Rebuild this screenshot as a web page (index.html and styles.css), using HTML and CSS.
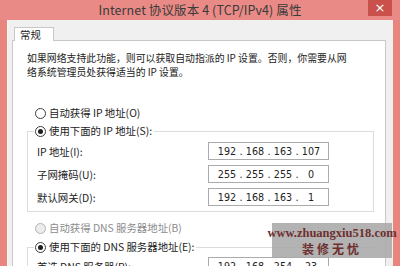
FILE: index.html
```html
<!DOCTYPE html>
<html lang="zh-CN">
<head>
<meta charset="utf-8">
<link rel="stylesheet" href="styles.css">
</head>
<body>
<div class="window">
  <div class="titlebar">
    <span class="title">Internet 协议版本 4 (TCP/IPv4) 属性</span>
    <div class="close">×</div>
  </div>
  <div class="client">
    <div class="tabs"><div class="tab">常规</div></div>
    <div class="panel">
      <p class="desc">如果网络支持此功能，则可以获取自动指派的 IP 设置。否则，你需要从网<br>络系统管理员处获得适当的 IP 设置。</p>
      <div class="radio-row first"><span class="radio"></span>自动获得 IP 地址(O)</div>
      <fieldset class="group">
        <legend><span class="radio checked"></span>使用下面的 IP 地址(S):</legend>
        <div class="row"><span class="lbl">IP 地址(I):</span><div class="ip"><span>192</span><i>.</i><span>168</span><i>.</i><span>163</span><i>.</i><span>107</span></div></div>
        <div class="row"><span class="lbl">子网掩码(U):</span><div class="ip"><span>255</span><i>.</i><span>255</span><i>.</i><span>255</span><i>.</i><span>0</span></div></div>
        <div class="row"><span class="lbl">默认网关(D):</span><div class="ip"><span>192</span><i>.</i><span>168</span><i>.</i><span>163</span><i>.</i><span>1</span></div></div>
      </fieldset>
      <div class="radio-row disabled"><span class="radio"></span>自动获得 DNS 服务器地址(B)</div>
      <fieldset class="group dns">
        <legend><span class="radio checked"></span>使用下面的 DNS 服务器地址(E):</legend>
        <div class="row"><span class="lbl">首选 DNS 服务器(P):</span><div class="ip"><span>192</span><i>.</i><span>168</span><i>.</i><span>254</span><i>.</i><span>23</span></div></div>
      </fieldset>
    </div>
  </div>
  <div class="watermark">
    <div class="wm-url">www.zhuangxiu518.com</div>
    <div class="wm-cn">装修无忧</div>
  </div>
</div>
</body>
</html>
```
FILE: styles.css
```css
html, body {
  margin: 0;
  padding: 0;
}
body {
  width: 400px;
  height: 266px;
  overflow: hidden;
  background: #e8857f;
  font-family: "Noto Sans CJK SC", "Noto Sans", sans-serif;
  color: #222;
}
.window {
  position: relative;
  width: 400px;
  height: 266px;
  overflow: hidden;
  display: flex;
  flex-direction: column;
}
.titlebar {
  position: relative;
  height: 20px;
  flex: none;
  display: flex;
  align-items: center;
  justify-content: center;
  background: #e98a86;
}
.title {
  font-size: 12.5px;
  color: #3a3a3a;
  line-height: 20px;
  letter-spacing: 0.1px;
}
.close {
  position: absolute;
  right: 8px;
  top: 0;
  width: 24px;
  height: 16px;
  background: #c9504b;
  color: #fff;
  font-size: 13px;
  line-height: 15px;
  text-align: center;
  font-family: "DejaVu Sans", sans-serif;
}
.client {
  flex: 1;
  margin: 0 7px 0 7px;
  background: #f0f0f0;
  border-left: 1px solid #f7f7f7;
  padding: 7px 7px 0 4px;
  display: flex;
  flex-direction: column;
}
.tabs {
  display: flex;
  padding-left: 2px;
  height: 13px;
  position: relative;
  z-index: 1;
}
.tab {
  width: 40px;
  height: 14px;
  background: #fff;
  border: 1px solid #c8c8c8;
  border-bottom: none;
  font-size: 10.4px;
  line-height: 14px;
  padding-left: 5px;
  box-sizing: border-box;
  color: #222;
}
.panel {
  flex: 1;
  background: #fff;
  border: 1px solid #c8c8c8;
  border-bottom: none;
  padding: 10px 11px 0 14px;
}
.desc {
  margin: 0;
  font-size: 9.9px;
  line-height: 14px;
  white-space: nowrap;
  color: #222;
}
.radio-row {
  display: flex;
  align-items: center;
  height: 14px;
  font-size: 10.4px;
  line-height: 14px;
  padding-left: 8px;
}
.radio-row.first {
  margin-top: 27px;
}
.radio-row.disabled {
  margin-top: 9px;
  color: #8c8c8c;
}
.radio {
  display: inline-flex;
  align-items: center;
  justify-content: center;
  width: 11px;
  height: 11px;
  box-sizing: border-box;
  border: 1px solid #3c3c3c;
  border-radius: 50%;
  background: #fff;
  margin-right: 3px;
  flex: none;
}
.radio.checked::after {
  content: "";
  width: 5px;
  height: 5px;
  border-radius: 50%;
  background: #1e1e1e;
}
.disabled .radio {
  border-color: #b4b4b4;
  background: #ececec;
}
.group {
  margin: 4px 0 0 0;
  padding: 4px 0 5px 9px;
  border: 1px solid #dcdcdc;
  min-width: 0;
}
.group legend {
  padding: 0 2px 0 1px;
  margin-left: -3px;
  display: flex;
  align-items: center;
  height: 14px;
  font-size: 10.4px;
  line-height: 14px;
}
.group.dns {
  margin-top: 5px;
  padding-top: 3px;
  border-right: none;
}
.row {
  display: flex;
  align-items: center;
  height: 18px;
  margin-bottom: 5px;
  font-size: 10.4px;
}
.row:last-child {
  margin-bottom: 0;
}
.lbl {
  width: 171px;
  flex: none;
}
.ip {
  width: 121px;
  height: 18px;
  box-sizing: border-box;
  border: 1px solid #ababab;
  display: flex;
  align-items: center;
  padding-left: 7px;
  font-family: "DejaVu Sans", sans-serif;
  font-size: 9.6px;
  color: #222;
}
.ip span {
  width: 22px;
  text-align: center;
}
.ip i {
  font-style: normal;
  width: 6px;
  text-align: center;
}
.watermark {
  position: absolute;
  left: 272px;
  top: 223px;
  width: 120px;
  height: 35px;
  background: rgba(168, 168, 168, 0.88);
  display: flex;
  flex-direction: column;
  align-items: center;
  justify-content: center;
  color: #6e2f2f;
}
.wm-url {
  font-family: "Liberation Serif", serif;
  font-weight: bold;
  font-size: 12.5px;
  line-height: 15px;
}
.wm-cn {
  font-family: "Noto Sans CJK SC", sans-serif;
  font-weight: bold;
  font-size: 12px;
  line-height: 15px;
  letter-spacing: 3px;
}
```
